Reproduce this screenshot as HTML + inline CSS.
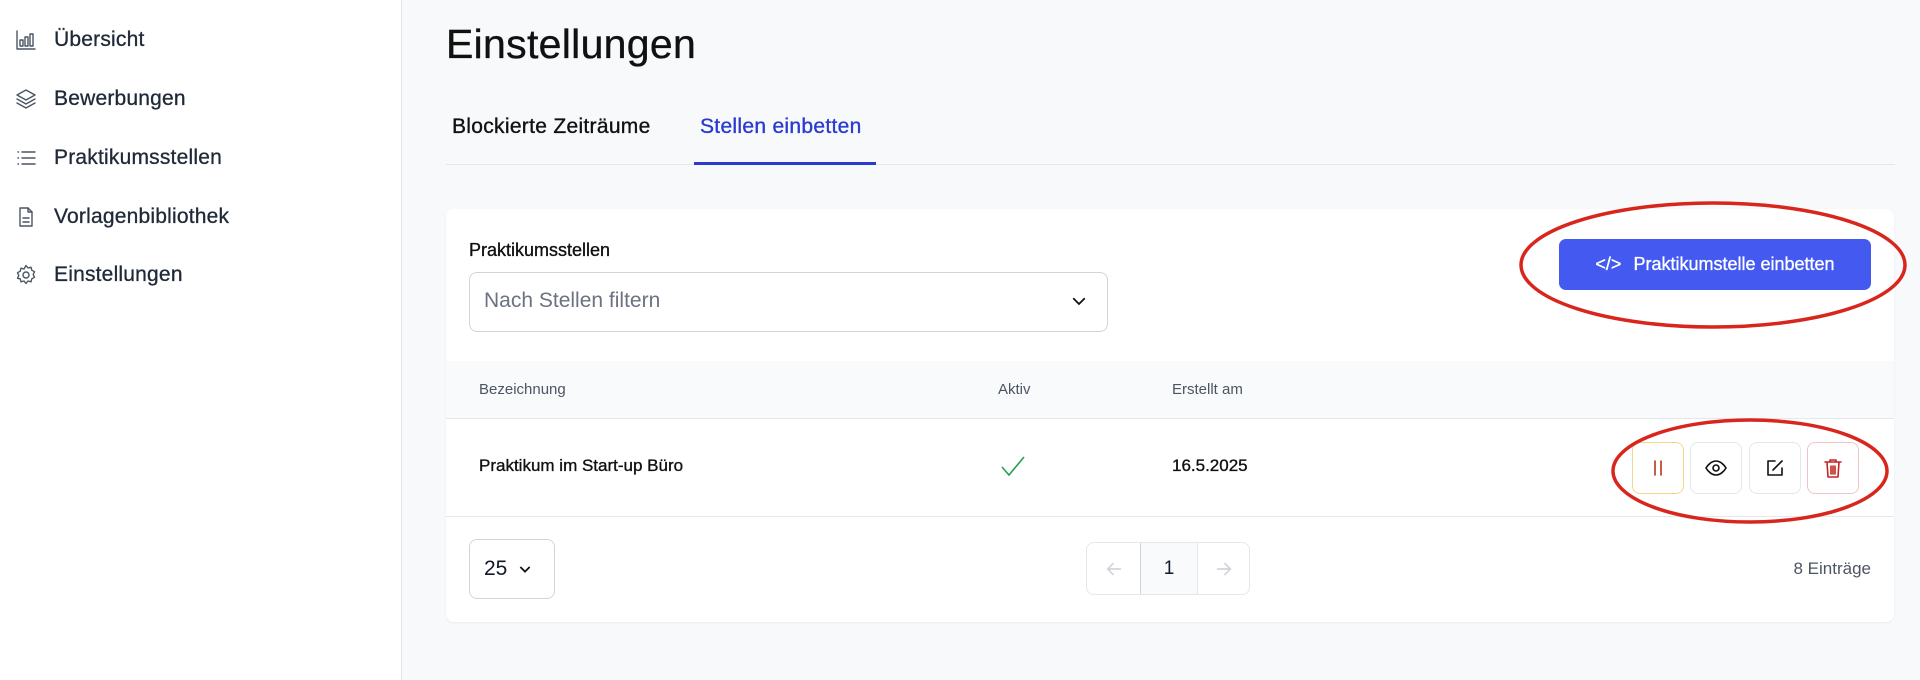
<!DOCTYPE html>
<html><head><meta charset="utf-8"><style>
*{box-sizing:border-box;margin:0;padding:0}
body{width:1920px;height:680px;background:#f8f9fb;font-family:"Liberation Sans",sans-serif;color:#111827;position:relative;overflow:hidden}
.abs{position:absolute}
.side{left:0;top:0;width:402px;height:680px;background:#fff;border-right:1px solid #e5e7eb}
.nav{position:absolute;left:14px;display:flex;align-items:center;font-size:21px;letter-spacing:.2px;color:#1f2937;height:30px;-webkit-text-stroke:.3px #1f2937}
.nav svg{width:24px;height:24px;margin-right:16px;fill:none;stroke:#4b5563;stroke-width:1.4;stroke-linecap:round;stroke-linejoin:round}
.ab{position:absolute;top:442px;width:52px;height:52px;border:1px solid #e5e7eb;border-radius:8px;background:#fff;display:flex;align-items:center;justify-content:center}
.ab svg{width:24px;height:24px;fill:none;stroke-width:1.6;stroke-linecap:round;stroke-linejoin:round}
.m{-webkit-text-stroke:.35px currentColor}
</style></head><body>
<div class="abs side">
<div class="nav" style="top:25px"><svg viewBox="0 0 24 24"><path d="M3 3v18h18"/><rect x="6" y="12" width="3" height="6"/><rect x="11" y="9" width="3" height="9"/><rect x="16" y="6" width="3" height="12"/></svg>Übersicht</div>
<div class="nav" style="top:84px"><svg viewBox="0 0 24 24"><path d="M12 3l9 5-9 5-9-5z"/><path d="M3 12l9 5 9-5"/><path d="M3 16l9 5 9-5"/></svg>Bewerbungen</div>
<div class="nav" style="top:143px"><svg viewBox="0 0 24 24"><path d="M8 6h13M8 12h13M8 18h13M4 6h.5M4 12h.5M4 18h.5"/></svg>Praktikumsstellen</div>
<div class="nav" style="top:202px"><svg viewBox="0 0 24 24"><path d="M14 3H6v18h12V7z"/><path d="M14 3v4h4M9 13h6M9 17h6"/></svg>Vorlagenbibliothek</div>
<div class="nav" style="top:260px"><svg viewBox="0 0 24 24"><circle cx="12" cy="12" r="3"/><path d="M12 2.5l2 2.5 3-.8.8 3 2.7 1.5-1.3 2.8 1.3 2.8-2.7 1.5-.8 3-3-.8-2 2.5-2-2.5-3 .8-.8-3L3.5 15.3 4.8 12.5 3.5 9.7l2.7-1.5.8-3 3 .8z"/></svg>Einstellungen</div>
</div>
<div class="abs m" style="left:446px;top:21px;font-size:41px;letter-spacing:.3px;color:#111">Einstellungen</div>
<div class="abs m" style="left:452px;top:115px;font-size:21px;letter-spacing:.3px;color:#111">Blockierte Zeiträume</div>
<div class="abs m" style="left:700px;top:115px;font-size:21px;letter-spacing:.3px;color:#2b3ad0">Stellen einbetten</div>
<div class="abs" style="left:446px;top:164px;width:1449px;height:1px;background:#e5e7eb"></div>
<div class="abs" style="left:694px;top:162px;width:182px;height:3px;background:#2b3ad0"></div>

<div class="abs" style="left:446px;top:209px;width:1448px;height:413px;background:#fff;border-radius:8px;box-shadow:0 1px 2px rgba(0,0,0,.06)"></div>
<div class="abs m" style="left:469px;top:240px;font-size:18px;color:#111">Praktikumsstellen</div>
<div class="abs" style="left:469px;top:272px;width:639px;height:60px;border:1px solid #d1d5db;border-radius:8px;background:#fff"></div>
<div class="abs" style="left:484px;top:289px;font-size:21px;color:#6b7280">Nach Stellen filtern</div>
<svg class="abs" style="left:1070px;top:292px" width="18" height="18" viewBox="0 0 24 24" fill="none" stroke="#111" stroke-width="2.4" stroke-linecap="round"><path d="M5 9l7 7 7-7"/></svg>

<div class="abs m" style="left:1559px;top:239px;width:312px;height:51px;background:#4359f0;border-radius:7px;color:#fff;font-size:18px;display:flex;align-items:center;justify-content:center"><span style="margin-right:12px;font-size:18px">&lt;/&gt;</span>Praktikumstelle einbetten</div>
<svg class="abs" style="left:1515px;top:196px" width="400" height="140"><ellipse cx="198" cy="69" rx="192" ry="62" fill="none" stroke="#d8261d" stroke-width="3.5"/></svg>

<div class="abs" style="left:446px;top:361px;width:1448px;height:58px;background:#f9fafb;border-bottom:1px solid #e5e7eb"></div>
<div class="abs" style="left:479px;top:381px;font-size:15px;color:#4b5563">Bezeichnung</div>
<div class="abs" style="left:998px;top:381px;font-size:15px;color:#4b5563">Aktiv</div>
<div class="abs" style="left:1172px;top:381px;font-size:15px;color:#4b5563">Erstellt am</div>
<div class="abs" style="left:446px;top:516px;width:1448px;height:1px;background:#e5e7eb"></div>
<div class="abs m" style="left:479px;top:456px;font-size:17px;color:#111">Praktikum im Start-up Büro</div>
<svg class="abs" style="left:1000px;top:455px" width="26" height="22" viewBox="0 0 26 22" fill="none" stroke="#22a052" stroke-width="1.6"><path d="M2 12l7 8L24 2"/></svg>
<div class="abs m" style="left:1172px;top:456px;font-size:17px;color:#111">16.5.2025</div>

<div class="ab" style="left:1632px;border-color:#f6d48a"><svg viewBox="0 0 24 24" stroke="#b8361c"><path d="M9 5v14M15 5v14"/></svg></div>
<div class="ab" style="left:1690px"><svg viewBox="0 0 24 24" stroke="#111"><path d="M2 12s4-7 10-7 10 7 10 7-4 7-10 7S2 12 2 12z"/><circle cx="12" cy="12" r="3"/></svg></div>
<div class="ab" style="left:1749px"><svg viewBox="0 0 24 24" stroke="#111"><path d="M12 5H5v14h14v-7"/><path d="M10 14l9-9"/></svg></div>
<div class="ab" style="left:1807px;border-color:#f1c5c5"><svg viewBox="0 0 24 24" stroke="#c42323"><path d="M4 6h16M9 6V4h6v2M6 6l1 15h10l1-15M10 10v8M12 10v8M14 10v8"/></svg></div>
<svg class="abs" style="left:1608px;top:415px" width="290" height="112"><ellipse cx="142" cy="56" rx="137" ry="51" fill="none" stroke="#d8261d" stroke-width="3.5"/></svg>

<div class="abs" style="left:469px;top:539px;width:86px;height:60px;border:1px solid #d1d5db;border-radius:8px;display:flex;align-items:center;padding-left:14px;font-size:21px">25<svg style="margin-left:10px" width="16" height="16" viewBox="0 0 24 24" fill="none" stroke="#111" stroke-width="2.6"><path d="M5 9l7 7 7-7"/></svg></div>
<div class="abs" style="left:1086px;top:542px;width:164px;height:53px;border:1px solid #e5e7eb;border-radius:8px;display:flex;overflow:hidden">
<div style="width:53px;display:flex;align-items:center;justify-content:center"><svg width="22" height="22" viewBox="0 0 24 24" fill="none" stroke="#d1d5db" stroke-width="1.8" stroke-linecap="round"><path d="M19 12H5M11 6l-6 6 6 6"/></svg></div>
<div style="width:58px;background:#f9fafb;border-left:1px solid #d1d5db;border-right:1px solid #e5e7eb;display:flex;align-items:center;justify-content:center;font-size:19px">1</div>
<div style="flex:1;display:flex;align-items:center;justify-content:center"><svg width="22" height="22" viewBox="0 0 24 24" fill="none" stroke="#d1d5db" stroke-width="1.8" stroke-linecap="round"><path d="M5 12h14M13 6l6 6-6 6"/></svg></div>
</div>
<div class="abs" style="left:1760px;top:559px;width:111px;text-align:right;font-size:17px;color:#4b5563">8 Einträge</div>
</body></html>
